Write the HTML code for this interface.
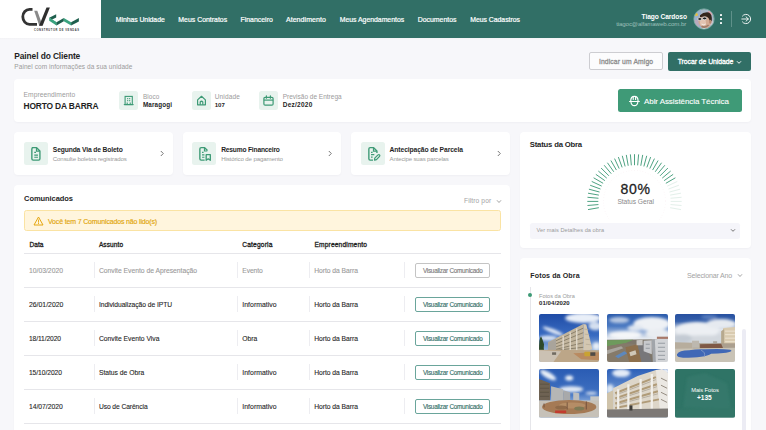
<!DOCTYPE html>
<html><head><meta charset="utf-8"><title>Painel do Cliente</title>
<style>
html,body{margin:0;padding:0;}
body{width:766px;height:430px;overflow:hidden;background:#f7f7fa;position:relative;font-family:"Liberation Sans",sans-serif;}
.abs{position:absolute;box-sizing:border-box;}
.t{position:absolute;white-space:nowrap;}
.card{position:absolute;background:#fff;border-radius:4px;box-shadow:0 1px 2px rgba(40,40,80,0.04);}
svg{display:block;}
.pb{display:inline-block;width:0;height:0;vertical-align:baseline;}
</style></head><body>
<div class="abs" style="left:0;top:0;width:101px;height:38px;background:#fff"></div>
<div class="abs" style="left:101px;top:0;width:665px;height:38px;background:#316f66"></div>
<div class="abs" style="left:0;top:38px;width:766px;height:2px;background:linear-gradient(rgba(0,0,0,0.02),rgba(0,0,0,0))"></div>
<svg class="abs" style="left:0;top:0" width="101" height="38" viewBox="0 0 101 38">
<path d="M32.5 9.3 H29.5 A6.7 7.55 0 0 0 29.5 24.4 H37" fill="none" stroke="#333" stroke-width="2.8"/>
<polygon points="34.2,10.8 37.3,10.8 42.6,25.8 39.3,25.8" fill="#8a8a8a"/>
<polygon points="46.5,7.6 49.9,7.6 42.6,25.8 39.1,25.8" fill="#2e2e2e"/>
<polygon points="56.2,14.2 56.2,17.4 52.2,19.4 49.2,17.8" fill="#1e5e4d"/>
<polygon points="49.2,17.8 52.2,19.4 56.5,22.2 56.5,25.4" fill="#3aa37f"/>
<polygon points="49.2,17.8 49.2,20.8 56.5,25.4 56.5,22.2" fill="#3aa37f"/>
<polygon points="56.5,22.2 63.8,18.0 63.8,21.2 56.5,25.4" fill="#1e5e4d"/>
<polygon points="63.8,18.0 71.1,22.2 71.1,25.4 63.8,21.2" fill="#3aa37f"/>
<polygon points="71.1,22.2 78.9,18.0 78.9,21.4 71.1,25.4" fill="#1e5e4d"/>
</svg>
<div class="t" style="left:34px;top:29.8px;font-size:2.6px;line-height:2.6px;font-weight:700;color:#3a3a3a;letter-spacing:0.57px">CONSTRUTOR DE VENDAS</div>
<div class="t" style="left:115.80px;top:17.00px;font-size:6.84px;line-height:6.84px;font-weight:400;color:#ffffff;letter-spacing:-0.034px;-webkit-text-stroke:0.2px #ffffff;">Minhas Unidade</div>
<div class="t" style="left:178.30px;top:17.01px;font-size:6.92px;line-height:6.92px;font-weight:400;color:#ffffff;letter-spacing:0.006px;-webkit-text-stroke:0.2px #ffffff;">Meus Contratos</div>
<div class="t" style="left:240.50px;top:17.00px;font-size:6.91px;line-height:6.91px;font-weight:400;color:#ffffff;letter-spacing:0.003px;-webkit-text-stroke:0.2px #ffffff;">Financeiro</div>
<div class="t" style="left:285.90px;top:16.02px;font-size:7.02px;line-height:7.02px;font-weight:400;color:#ffffff;letter-spacing:0.067px;-webkit-text-stroke:0.2px #ffffff;">Atendimento</div>
<div class="t" style="left:339.70px;top:17.00px;font-size:6.89px;line-height:6.89px;font-weight:400;color:#ffffff;letter-spacing:-0.008px;-webkit-text-stroke:0.2px #ffffff;">Meus Agendamentos</div>
<div class="t" style="left:417.70px;top:17.01px;font-size:6.92px;line-height:6.92px;font-weight:400;color:#ffffff;letter-spacing:0.007px;-webkit-text-stroke:0.2px #ffffff;">Documentos</div>
<div class="t" style="left:470.30px;top:17.01px;font-size:6.86px;line-height:6.86px;font-weight:400;color:#ffffff;letter-spacing:-0.025px;-webkit-text-stroke:0.2px #ffffff;">Meus Cadastros</div>
<div class="t" style="left:641.60px;top:14.00px;font-size:6.63px;line-height:6.63px;font-weight:700;color:#ffffff;letter-spacing:-0.075px;">Tiago Cardoso</div>
<div class="t" style="left:616.20px;top:21.01px;font-size:6.15px;line-height:6.15px;font-weight:400;color:#9dc0b9;letter-spacing:-0.125px;">tiagoc@alfamaweb.com.br</div>
<svg class="abs" style="left:693.2px;top:7.85px" width="22" height="22" viewBox="0 0 22 22">
<defs><clipPath id="av"><circle cx="11" cy="11" r="10"/></clipPath>
<filter id="bl" x="-10%" y="-10%" width="120%" height="120%"><feGaussianBlur stdDeviation="0.55"/></filter></defs>
<g clip-path="url(#av)"><rect width="22" height="22" fill="#a9b6c6"/>
<g filter="url(#bl)">
<rect x="0" y="0" width="8" height="22" fill="#9cb0cb"/>
<rect x="0" y="12" width="6" height="10" fill="#b9a9bd"/>
<circle cx="3.4" cy="6.6" r="1.5" fill="#e9bf37"/>
<circle cx="17.5" cy="4.6" r="2.6" fill="#d9a7b4"/>
<circle cx="19" cy="15" r="2.4" fill="#c9c3cf"/>
<ellipse cx="11.6" cy="13.2" rx="6.2" ry="7.4" transform="rotate(-14 11.6 13.2)" fill="#d3ab94"/>
<ellipse cx="10" cy="14.5" rx="3" ry="3.5" fill="#e2c3b1"/>
<path d="M7 7.2 Q10.5 3.6 16 4.4 Q19.4 6 18.8 13.2 L16.6 12.8 Q16 8.6 12 8.4 Q9.2 8.4 7 9.2Z" fill="#34251e"/>
<ellipse cx="17.3" cy="13.8" rx="1.3" ry="2" fill="#b98870"/>
<ellipse cx="6.8" cy="11" rx="2.1" ry="1.4" fill="#1c1c1c" stroke="#f0f0f0" stroke-width="0.75"/>
<ellipse cx="11.6" cy="10.4" rx="2.1" ry="1.4" fill="#1c1c1c" stroke="#f0f0f0" stroke-width="0.75"/>
<path d="M8.5 18.2 Q12 20.4 15.6 17" fill="none" stroke="#7d5f50" stroke-width="1.6" opacity="0.6"/>
<path d="M8.6 16.1 Q10.6 17.3 12.8 16" fill="none" stroke="#f6efe9" stroke-width="0.9"/>
<rect x="4" y="20" width="16" height="3" fill="#e8e3e6"/>
</g></g>
<circle cx="11" cy="11" r="10.2" fill="none" stroke="#7fb0a7" stroke-width="0.8"/>
</svg>
<div class="abs" style="left:720px;top:13.7px;width:2px;height:2px;background:#fff;border-radius:0.4px"></div>
<div class="abs" style="left:720px;top:18.1px;width:2px;height:2px;background:#fff;border-radius:0.4px"></div>
<div class="abs" style="left:720px;top:22.4px;width:2px;height:2px;background:#fff;border-radius:0.4px"></div>
<div class="abs" style="left:731px;top:11px;width:1px;height:16px;background:#5f918a"></div>
<svg class="abs" style="left:740px;top:13px" width="12" height="12" viewBox="0 0 12 12">
<path d="M2.2 3.4 A4.6 4.6 0 1 1 2.2 8.6" fill="none" stroke="#fff" stroke-width="0.9"/>
<path d="M1.8 6 H8.3 M6 3.8 L8.3 6 L6 8.2" fill="none" stroke="#fff" stroke-width="0.9" stroke-linecap="round" stroke-linejoin="round"/>
</svg>
<div class="t" style="left:14.30px;top:52.00px;font-size:8.42px;line-height:8.42px;font-weight:700;color:#1f1f1f;letter-spacing:-0.110px;">Painel do Cliente</div>
<div class="t" style="left:14.30px;top:64.02px;font-size:6.52px;line-height:6.52px;font-weight:400;color:#9b9b9b;letter-spacing:0.062px;">Painel com informações da sua unidade</div>
<div class="abs" style="left:589.1px;top:51.5px;width:74.4px;height:18.8px;border:1px solid #cdcdd1;border-radius:2px;background:#fcfcfd"></div>
<div class="t" style="left:598.90px;top:59.00px;font-size:6.78px;line-height:6.78px;font-weight:400;color:#8e8e8e;letter-spacing:0.128px;-webkit-text-stroke:0.3px #8e8e8e;">Indicar um Amigo</div>
<div class="abs" style="left:668.3px;top:51.9px;width:82.8px;height:18.8px;border-radius:2px;background:#316f66"></div>
<div class="t" style="left:677.70px;top:59.00px;font-size:6.87px;line-height:6.87px;font-weight:400;color:#ffffff;letter-spacing:-0.053px;-webkit-text-stroke:0.3px #ffffff;">Trocar de Unidade</div>
<svg class="abs" style="left:736.3px;top:59.5px" width="6" height="5" viewBox="0 0 6 5"><path d="M1 1.3 L3 3.3 L5 1.3" fill="none" stroke="#fff" stroke-width="1"/></svg>
<div class="card" style="left:14px;top:79px;width:737px;height:43px"></div>
<div class="t" style="left:23.50px;top:92.00px;font-size:6.66px;line-height:6.66px;font-weight:400;color:#9b9b9b;letter-spacing:0.073px;">Empreendimento</div>
<div class="t" style="left:23.50px;top:102.01px;font-size:8.42px;line-height:8.42px;font-weight:700;color:#1f1f1f;letter-spacing:-0.154px;">HORTO DA BARRA</div>
<div class="abs" style="left:119.3px;top:91px;width:19px;height:19px;background:#e8f3ee;border-radius:2.5px"></div>
<svg class="abs" style="left:119.3px;top:91px" width="19" height="19" viewBox="0 0 19 19"><g fill="none" stroke="#3d9a75" stroke-width="1.1">
<rect x="6.1" y="5.4" width="7.2" height="8.2"/>
<path d="M4.8 13.6 H14.6"/>
<path d="M8.2 7.6 h1 M10.2 7.6 h1 M8.2 9.6 h1 M10.2 9.6 h1 M8.2 11.6 v2 M11.2 11.6 v2"/>
</g></svg>
<div class="t" style="left:142.90px;top:94.00px;font-size:6.40px;line-height:6.40px;font-weight:400;color:#9b9b9b;letter-spacing:0.098px;">Bloco</div>
<div class="t" style="left:142.90px;top:102.00px;font-size:6.34px;line-height:6.34px;font-weight:700;color:#1f1f1f;letter-spacing:0.158px;">Maragogi</div>
<div class="abs" style="left:191.5px;top:91px;width:19px;height:19px;background:#e8f3ee;border-radius:2.5px"></div>
<svg class="abs" style="left:191.5px;top:91px" width="19" height="19" viewBox="0 0 19 19"><g fill="none" stroke="#3d9a75" stroke-width="1.2" stroke-linejoin="round">
<path d="M5.6 13.8 V8.9 L9.5 5.3 L13.4 8.9 V13.8 Z"/>
<path d="M8.2 13.8 V10.9 Q9.5 9.6 10.8 10.9 V13.8"/>
</g></svg>
<div class="t" style="left:214.70px;top:94.02px;font-size:6.52px;line-height:6.52px;font-weight:400;color:#9b9b9b;letter-spacing:0.172px;">Unidade</div>
<div class="t" style="left:214.70px;top:102.00px;font-size:6.11px;line-height:6.11px;font-weight:700;color:#1f1f1f;letter-spacing:0.001px;">107</div>
<div class="abs" style="left:259.2px;top:91px;width:19px;height:19px;background:#e8f3ee;border-radius:2.5px"></div>
<svg class="abs" style="left:259.2px;top:91px" width="19" height="19" viewBox="0 0 19 19"><g fill="none" stroke="#3d9a75" stroke-width="1.2">
<rect x="4.9" y="6.3" width="9.2" height="7.8" rx="1.2"/>
<path d="M4.9 9.1 H14.1"/>
<path d="M7.4 4.8 V7.2 M11.4 4.8 V7.2" stroke-linecap="round"/>
</g></svg>
<div class="t" style="left:282.70px;top:94.01px;font-size:6.53px;line-height:6.53px;font-weight:400;color:#9b9b9b;letter-spacing:-0.005px;">Previsão de Entrega</div>
<div class="t" style="left:282.70px;top:102.00px;font-size:6.51px;line-height:6.51px;font-weight:700;color:#1f1f1f;letter-spacing:0.263px;">Dez/2020</div>
<div class="abs" style="left:617.5px;top:88.7px;width:124.3px;height:23.7px;background:#3f9a77;border-radius:2.5px"></div>
<svg class="abs" style="left:627px;top:94px" width="14" height="14" viewBox="0 0 14 14">
<g fill="none" stroke="#fff" stroke-width="1.15" stroke-linecap="round">
<path d="M3.7 7.2 Q3.7 2.3 7.4 2.3 Q11.1 2.3 11.1 7.2"/>
<path d="M2.5 7.5 H12.3"/>
<path d="M3.9 7.7 Q4.3 11.6 7.4 11.6 Q10.5 11.6 10.9 7.7"/>
<path d="M6.2 3.2 V5.4 M8.6 3.2 V5.4"/>
</g></svg>
<div class="t" style="left:644.00px;top:98.02px;font-size:7.99px;line-height:7.99px;font-weight:400;color:#ffffff;letter-spacing:-0.067px;-webkit-text-stroke:0.1px #ffffff;">Abir Assistência Técnica</div>
<div class="card" style="left:14.4px;top:132px;width:158.7px;height:43px"></div>
<div class="abs" style="left:23.8px;top:141.8px;width:23.8px;height:23.6px;background:#e8f3ee;border-radius:2.5px"></div>
<svg class="abs" style="left:23.8px;top:142px" width="24" height="24" viewBox="0 0 22 22"><path d="M7.2 5.2 H11.6 L14.6 8.2 V15.4 Q14.6 16.6 13.4 16.6 H8.4 Q7.2 16.6 7.2 15.4 V6.4 Q7.2 5.2 8.4 5.2" fill="none" stroke="#3d9a75" stroke-width="1.25" stroke-linejoin="round"/><path d="M11.4 5.4 V8.4 H14.4" fill="none" stroke="#3d9a75" stroke-width="1"/><path d="M9.4 9.6 h1.6 M9.4 12 h3.4 M9.4 14 h3.4" stroke="#3d9a75" stroke-width="1.1" fill="none"/></svg>
<div class="t" style="left:52.80px;top:147.02px;font-size:6.72px;line-height:6.72px;font-weight:700;color:#1f1f1f;letter-spacing:-0.136px;">Segunda Via de Boleto</div>
<div class="t" style="left:52.80px;top:156.01px;font-size:6.12px;line-height:6.12px;font-weight:400;color:#9b9b9b;letter-spacing:-0.124px;">Consulte boletos registrados</div>
<svg class="abs" style="left:159.0px;top:150px" width="6" height="7" viewBox="0 0 6 7"><path d="M1.8 1 L4.3 3.5 L1.8 6" fill="none" stroke="#777" stroke-width="1"/></svg>
<div class="card" style="left:183.2px;top:132px;width:158.2px;height:43px"></div>
<div class="abs" style="left:192.3px;top:141.8px;width:23.8px;height:23.6px;background:#e8f3ee;border-radius:2.5px"></div>
<svg class="abs" style="left:192.3px;top:142px" width="24" height="24" viewBox="0 0 22 22"><path d="M11.6 16.6 H8.4 Q7.2 16.6 7.2 15.4 V6.4 Q7.2 5.2 8.4 5.2 H11.6 L14.2 7.8" fill="none" stroke="#3d9a75" stroke-width="1.25" stroke-linejoin="round"/><path d="M11.4 5.4 V8.2 H14" fill="none" stroke="#3d9a75" stroke-width="1"/><path d="M9.2 9.6 h1.4 M9.2 11.8 h2.2 M9.2 14 h2.2" stroke="#3d9a75" stroke-width="1.1" fill="none"/><path d="M13 16.8 V11.6 H16.8 V16.8 L14.9 15.4 Z" fill="none" stroke="#3d9a75" stroke-width="1.2" stroke-linejoin="round"/></svg>
<div class="t" style="left:221.20px;top:147.01px;font-size:6.65px;line-height:6.65px;font-weight:700;color:#1f1f1f;letter-spacing:-0.181px;">Resumo Financeiro</div>
<div class="t" style="left:221.20px;top:156.01px;font-size:6.12px;line-height:6.12px;font-weight:400;color:#9b9b9b;letter-spacing:-0.134px;">Histórico de pagamento</div>
<svg class="abs" style="left:327.3px;top:150px" width="6" height="7" viewBox="0 0 6 7"><path d="M1.8 1 L4.3 3.5 L1.8 6" fill="none" stroke="#777" stroke-width="1"/></svg>
<div class="card" style="left:351.4px;top:132px;width:158.5px;height:43px"></div>
<div class="abs" style="left:361.2px;top:141.8px;width:23.8px;height:23.6px;background:#e8f3ee;border-radius:2.5px"></div>
<svg class="abs" style="left:361.2px;top:142px" width="24" height="24" viewBox="0 0 22 22"><path d="M11 16.6 H8.4 Q7.2 16.6 7.2 15.4 V6.4 Q7.2 5.2 8.4 5.2 H11.6 L14.6 8.2 V10" fill="none" stroke="#3d9a75" stroke-width="1.25" stroke-linejoin="round"/><path d="M11.4 5.4 V8.4 H14.4" fill="none" stroke="#3d9a75" stroke-width="1"/><path d="M9.2 9.6 h1.4 M9.2 11.6 h3 M9.2 13.8 h1.4" stroke="#3d9a75" stroke-width="1.1" fill="none"/><path d="M12.4 16.6 L12.6 14.8 L15.6 11.8 Q16.4 11.2 17 11.8 Q17.6 12.6 17 13.2 L14.2 16.2 Z" fill="none" stroke="#3d9a75" stroke-width="1.1" stroke-linejoin="round"/></svg>
<div class="t" style="left:389.60px;top:147.02px;font-size:6.75px;line-height:6.75px;font-weight:700;color:#1f1f1f;letter-spacing:-0.117px;">Antecipação de Parcela</div>
<div class="t" style="left:389.60px;top:156.01px;font-size:6.06px;line-height:6.06px;font-weight:400;color:#9b9b9b;letter-spacing:-0.156px;">Antecipe suas parcelas</div>
<svg class="abs" style="left:495.8px;top:150px" width="6" height="7" viewBox="0 0 6 7"><path d="M1.8 1 L4.3 3.5 L1.8 6" fill="none" stroke="#777" stroke-width="1"/></svg>
<div class="card" style="left:520px;top:132.2px;width:230.8px;height:115.5px"></div>
<div class="t" style="left:529.80px;top:141.01px;font-size:7.71px;line-height:7.71px;font-weight:700;color:#1f1f1f;letter-spacing:-0.189px;">Status da Obra</div>
<svg class="abs" style="left:580px;top:145px" width="110" height="75" viewBox="0 0 110 75"><circle cx="54.5" cy="56.400000000000006" r="31" fill="none" stroke="#f6e8ec" stroke-width="0.6" stroke-dasharray="0.6 2.2"/><line x1="18.85" y1="62.69" x2="8.02" y2="64.60" stroke="#4fa383" stroke-width="1.0"/><line x1="18.44" y1="59.56" x2="7.48" y2="60.51" stroke="#4fa383" stroke-width="1.0"/><line x1="18.30" y1="56.40" x2="7.30" y2="56.40" stroke="#4fa383" stroke-width="1.0"/><line x1="18.44" y1="53.24" x2="7.48" y2="52.29" stroke="#4fa383" stroke-width="1.0"/><line x1="18.85" y1="50.11" x2="8.02" y2="48.20" stroke="#4fa383" stroke-width="1.0"/><line x1="19.53" y1="47.03" x2="8.91" y2="44.18" stroke="#4fa383" stroke-width="1.0"/><line x1="20.48" y1="44.02" x2="10.15" y2="40.26" stroke="#4fa383" stroke-width="1.0"/><line x1="21.69" y1="41.10" x2="11.72" y2="36.45" stroke="#4fa383" stroke-width="1.0"/><line x1="23.15" y1="38.30" x2="13.62" y2="32.80" stroke="#4fa383" stroke-width="1.0"/><line x1="24.85" y1="35.64" x2="15.84" y2="29.33" stroke="#4fa383" stroke-width="1.0"/><line x1="26.77" y1="33.13" x2="18.34" y2="26.06" stroke="#4fa383" stroke-width="1.0"/><line x1="28.90" y1="30.80" x2="21.12" y2="23.02" stroke="#4fa383" stroke-width="1.0"/><line x1="31.23" y1="28.67" x2="24.16" y2="20.24" stroke="#4fa383" stroke-width="1.0"/><line x1="33.74" y1="26.75" x2="27.43" y2="17.74" stroke="#4fa383" stroke-width="1.0"/><line x1="36.40" y1="25.05" x2="30.90" y2="15.52" stroke="#4fa383" stroke-width="1.0"/><line x1="39.20" y1="23.59" x2="34.55" y2="13.62" stroke="#4fa383" stroke-width="1.0"/><line x1="42.12" y1="22.38" x2="38.36" y2="12.05" stroke="#4fa383" stroke-width="1.0"/><line x1="45.13" y1="21.43" x2="42.28" y2="10.81" stroke="#4fa383" stroke-width="1.0"/><line x1="48.21" y1="20.75" x2="46.30" y2="9.92" stroke="#4fa383" stroke-width="1.0"/><line x1="51.34" y1="20.34" x2="50.39" y2="9.38" stroke="#4fa383" stroke-width="1.0"/><line x1="54.50" y1="20.20" x2="54.50" y2="9.20" stroke="#4fa383" stroke-width="1.0"/><line x1="57.66" y1="20.34" x2="58.61" y2="9.38" stroke="#4fa383" stroke-width="1.0"/><line x1="60.79" y1="20.75" x2="62.70" y2="9.92" stroke="#4fa383" stroke-width="1.0"/><line x1="63.87" y1="21.43" x2="66.72" y2="10.81" stroke="#4fa383" stroke-width="1.0"/><line x1="66.88" y1="22.38" x2="70.64" y2="12.05" stroke="#4fa383" stroke-width="1.0"/><line x1="69.80" y1="23.59" x2="74.45" y2="13.62" stroke="#4fa383" stroke-width="1.0"/><line x1="72.60" y1="25.05" x2="78.10" y2="15.52" stroke="#4fa383" stroke-width="1.0"/><line x1="75.26" y1="26.75" x2="81.57" y2="17.74" stroke="#4fa383" stroke-width="1.0"/><line x1="77.77" y1="28.67" x2="84.84" y2="20.24" stroke="#4fa383" stroke-width="1.0"/><line x1="80.10" y1="30.80" x2="87.88" y2="23.02" stroke="#4fa383" stroke-width="1.0"/><line x1="82.23" y1="33.13" x2="90.66" y2="26.06" stroke="#4fa383" stroke-width="1.0"/><line x1="84.15" y1="35.64" x2="93.16" y2="29.33" stroke="#4fa383" stroke-width="1.0"/><line x1="85.85" y1="38.30" x2="95.38" y2="32.80" stroke="#4fa383" stroke-width="1.0"/><line x1="87.31" y1="41.10" x2="97.28" y2="36.45" stroke="#e3f0ea" stroke-width="1.0"/><line x1="88.52" y1="44.02" x2="98.85" y2="40.26" stroke="#e3f0ea" stroke-width="1.0"/><line x1="89.47" y1="47.03" x2="100.09" y2="44.18" stroke="#e3f0ea" stroke-width="1.0"/><line x1="90.15" y1="50.11" x2="100.98" y2="48.20" stroke="#e3f0ea" stroke-width="1.0"/><line x1="90.56" y1="53.24" x2="101.52" y2="52.29" stroke="#e3f0ea" stroke-width="1.0"/><line x1="90.70" y1="56.40" x2="101.70" y2="56.40" stroke="#e3f0ea" stroke-width="1.0"/><line x1="90.56" y1="59.56" x2="101.52" y2="60.51" stroke="#e3f0ea" stroke-width="1.0"/><line x1="90.15" y1="62.69" x2="100.98" y2="64.60" stroke="#e3f0ea" stroke-width="1.0"/></svg>
<div class="t" style="left:620.40px;top:182.00px;font-size:14.07px;line-height:14.07px;font-weight:400;color:#1f1f1f;letter-spacing:0.732px;-webkit-text-stroke:0.3px #1f1f1f;">80%</div>
<div class="t" style="left:617.40px;top:199.01px;font-size:6.71px;line-height:6.71px;font-weight:400;color:#8a8a8a;letter-spacing:-0.062px;">Status Geral</div>
<div class="abs" style="left:529.6px;top:222.5px;width:210.5px;height:16px;background:#f5f5fa;border-radius:2.5px"></div>
<div class="t" style="left:536.50px;top:228.01px;font-size:5.63px;line-height:5.63px;font-weight:400;color:#9a9a9a;letter-spacing:0.052px;">Ver mais Detalhes da obra</div>
<svg class="abs" style="left:729.5px;top:228px" width="6" height="5" viewBox="0 0 6 5"><path d="M1 1.3 L3 3.3 L5 1.3" fill="none" stroke="#666" stroke-width="0.9"/></svg>
<div class="card" style="left:14.4px;top:185.2px;width:495.8px;height:260px"></div>
<div class="t" style="left:24.10px;top:195.01px;font-size:7.51px;line-height:7.51px;font-weight:700;color:#1f1f1f;letter-spacing:-0.076px;">Comunicados</div>
<div class="t" style="left:464.00px;top:198.01px;font-size:6.64px;line-height:6.64px;font-weight:400;color:#a3a3a3;letter-spacing:0.111px;">Filtro por</div>
<svg class="abs" style="left:495.5px;top:198.5px" width="6" height="5" viewBox="0 0 6 5"><path d="M1 1.3 L3 3.5 L5 1.3" fill="none" stroke="#9a9a9a" stroke-width="0.9"/></svg>
<div class="abs" style="left:23.9px;top:210.3px;width:477px;height:21.1px;background:#fff5dd;border:1px solid #fae3a3;border-radius:2.5px"></div>
<svg class="abs" style="left:33px;top:216px" width="11" height="10" viewBox="0 0 11 10">
<path d="M5.5 1 L10 9 H1 Z" fill="none" stroke="#e5a60f" stroke-width="1" stroke-linejoin="round"/>
<path d="M5.5 4 V6.2 M5.5 7.3 V7.6" stroke="#e5a60f" stroke-width="0.9" stroke-linecap="round"/></svg>
<div class="t" style="left:48.00px;top:219.01px;font-size:6.97px;line-height:6.97px;font-weight:400;color:#e2a50c;letter-spacing:-0.143px;-webkit-text-stroke:0.15px #e2a50c;">Você tem 7 Comunicados não lido(s)</div>
<div class="t" style="left:29.40px;top:242.02px;font-size:6.53px;line-height:6.53px;font-weight:400;color:#1f1f1f;letter-spacing:0.097px;-webkit-text-stroke:0.3px #1f1f1f;">Data</div>
<div class="t" style="left:98.90px;top:242.00px;font-size:6.54px;line-height:6.54px;font-weight:400;color:#1f1f1f;letter-spacing:0.091px;-webkit-text-stroke:0.3px #1f1f1f;">Assunto</div>
<div class="t" style="left:242.30px;top:242.00px;font-size:6.67px;line-height:6.67px;font-weight:400;color:#1f1f1f;letter-spacing:0.156px;-webkit-text-stroke:0.3px #1f1f1f;">Categoria</div>
<div class="t" style="left:314.50px;top:242.00px;font-size:6.64px;line-height:6.64px;font-weight:400;color:#1f1f1f;letter-spacing:0.149px;-webkit-text-stroke:0.3px #1f1f1f;">Empreendimento</div>
<div class="abs" style="left:23.9px;top:252.8px;width:477px;height:1px;background:#e6e6ea"></div>
<div class="abs" style="left:23.9px;top:286.8px;width:477px;height:1px;background:#e6e6ea"></div>
<div class="abs" style="left:23.9px;top:320.8px;width:477px;height:1px;background:#e6e6ea"></div>
<div class="abs" style="left:23.9px;top:354.8px;width:477px;height:1px;background:#e6e6ea"></div>
<div class="abs" style="left:23.9px;top:388.8px;width:477px;height:1px;background:#e6e6ea"></div>
<div class="abs" style="left:23.9px;top:422.8px;width:477px;height:1px;background:#e6e6ea"></div>
<div class="t" style="left:28.90px;top:268.00px;font-size:6.83px;line-height:6.83px;font-weight:400;color:#9a9a9a;letter-spacing:0.000px;-webkit-text-stroke:0.1px #9a9a9a;">10/03/2020</div>
<div class="t" style="left:98.90px;top:268.00px;font-size:6.79px;line-height:6.79px;font-weight:400;color:#9a9a9a;letter-spacing:-0.021px;-webkit-text-stroke:0.1px #9a9a9a;">Convite Evento de Apresentação</div>
<div class="t" style="left:242.30px;top:268.01px;font-size:6.71px;line-height:6.71px;font-weight:400;color:#9a9a9a;letter-spacing:-0.077px;-webkit-text-stroke:0.1px #9a9a9a;">Evento</div>
<div class="t" style="left:314.20px;top:268.02px;font-size:6.75px;line-height:6.75px;font-weight:400;color:#9a9a9a;letter-spacing:-0.040px;-webkit-text-stroke:0.1px #9a9a9a;">Horto da Barra</div>
<div class="abs" style="left:94.0px;top:262.1px;width:1px;height:15.7px;background:#ededf1"></div>
<div class="abs" style="left:236.9px;top:262.1px;width:1px;height:15.7px;background:#ededf1"></div>
<div class="abs" style="left:308.8px;top:262.1px;width:1px;height:15.7px;background:#ededf1"></div>
<div class="abs" style="left:403.9px;top:262.1px;width:1px;height:15.7px;background:#ededf1"></div>
<div class="abs" style="left:415.3px;top:263.3px;width:75.2px;height:14.3px;border:1px solid #c4c4c4;border-radius:2px"></div>
<div class="t" style="left:422.90px;top:268.01px;font-size:6.34px;line-height:6.34px;font-weight:400;color:#7a7a7a;letter-spacing:-0.232px;-webkit-text-stroke:0.12px #7a7a7a;">Visualizar Comunicado</div>
<div class="t" style="left:28.90px;top:302.01px;font-size:6.87px;line-height:6.87px;font-weight:400;color:#262626;letter-spacing:0.023px;-webkit-text-stroke:0.1px #262626;">26/01/2020</div>
<div class="t" style="left:98.90px;top:302.00px;font-size:6.73px;line-height:6.73px;font-weight:400;color:#262626;letter-spacing:-0.047px;-webkit-text-stroke:0.1px #262626;">Individualização de IPTU</div>
<div class="t" style="left:242.30px;top:302.01px;font-size:6.89px;line-height:6.89px;font-weight:400;color:#262626;letter-spacing:0.031px;-webkit-text-stroke:0.1px #262626;">Informativo</div>
<div class="t" style="left:314.20px;top:302.02px;font-size:6.75px;line-height:6.75px;font-weight:400;color:#262626;letter-spacing:-0.040px;-webkit-text-stroke:0.1px #262626;">Horto da Barra</div>
<div class="abs" style="left:94.0px;top:296.1px;width:1px;height:15.7px;background:#ededf1"></div>
<div class="abs" style="left:236.9px;top:296.1px;width:1px;height:15.7px;background:#ededf1"></div>
<div class="abs" style="left:308.8px;top:296.1px;width:1px;height:15.7px;background:#ededf1"></div>
<div class="abs" style="left:403.9px;top:296.1px;width:1px;height:15.7px;background:#ededf1"></div>
<div class="abs" style="left:415.3px;top:297.3px;width:75.2px;height:14.3px;border:1px solid #6aa59b;border-radius:2px"></div>
<div class="t" style="left:422.90px;top:302.01px;font-size:6.34px;line-height:6.34px;font-weight:400;color:#2f6e66;letter-spacing:-0.232px;-webkit-text-stroke:0.12px #2f6e66;">Visualizar Comunicado</div>
<div class="t" style="left:28.90px;top:336.02px;font-size:6.68px;line-height:6.68px;font-weight:400;color:#262626;letter-spacing:-0.081px;-webkit-text-stroke:0.1px #262626;">18/11/2020</div>
<div class="t" style="left:98.90px;top:336.00px;font-size:6.79px;line-height:6.79px;font-weight:400;color:#262626;letter-spacing:-0.023px;-webkit-text-stroke:0.1px #262626;">Convite Evento Viva</div>
<div class="t" style="left:242.30px;top:336.00px;font-size:6.79px;line-height:6.79px;font-weight:400;color:#262626;letter-spacing:-0.033px;-webkit-text-stroke:0.1px #262626;">Obra</div>
<div class="t" style="left:314.20px;top:336.02px;font-size:6.75px;line-height:6.75px;font-weight:400;color:#262626;letter-spacing:-0.040px;-webkit-text-stroke:0.1px #262626;">Horto da Barra</div>
<div class="abs" style="left:94.0px;top:330.1px;width:1px;height:15.7px;background:#ededf1"></div>
<div class="abs" style="left:236.9px;top:330.1px;width:1px;height:15.7px;background:#ededf1"></div>
<div class="abs" style="left:308.8px;top:330.1px;width:1px;height:15.7px;background:#ededf1"></div>
<div class="abs" style="left:403.9px;top:330.1px;width:1px;height:15.7px;background:#ededf1"></div>
<div class="abs" style="left:415.3px;top:331.3px;width:75.2px;height:14.3px;border:1px solid #6aa59b;border-radius:2px"></div>
<div class="t" style="left:422.90px;top:336.01px;font-size:6.34px;line-height:6.34px;font-weight:400;color:#2f6e66;letter-spacing:-0.232px;-webkit-text-stroke:0.12px #2f6e66;">Visualizar Comunicado</div>
<div class="t" style="left:28.90px;top:370.00px;font-size:6.73px;line-height:6.73px;font-weight:400;color:#262626;letter-spacing:-0.055px;-webkit-text-stroke:0.1px #262626;">15/10/2020</div>
<div class="t" style="left:98.90px;top:370.00px;font-size:6.79px;line-height:6.79px;font-weight:400;color:#262626;letter-spacing:-0.022px;-webkit-text-stroke:0.1px #262626;">Status de Obra</div>
<div class="t" style="left:242.30px;top:370.01px;font-size:6.89px;line-height:6.89px;font-weight:400;color:#262626;letter-spacing:0.031px;-webkit-text-stroke:0.1px #262626;">Informativo</div>
<div class="t" style="left:314.20px;top:370.02px;font-size:6.75px;line-height:6.75px;font-weight:400;color:#262626;letter-spacing:-0.040px;-webkit-text-stroke:0.1px #262626;">Horto da Barra</div>
<div class="abs" style="left:94.0px;top:364.1px;width:1px;height:15.7px;background:#ededf1"></div>
<div class="abs" style="left:236.9px;top:364.1px;width:1px;height:15.7px;background:#ededf1"></div>
<div class="abs" style="left:308.8px;top:364.1px;width:1px;height:15.7px;background:#ededf1"></div>
<div class="abs" style="left:403.9px;top:364.1px;width:1px;height:15.7px;background:#ededf1"></div>
<div class="abs" style="left:415.3px;top:365.3px;width:75.2px;height:14.3px;border:1px solid #6aa59b;border-radius:2px"></div>
<div class="t" style="left:422.90px;top:370.01px;font-size:6.34px;line-height:6.34px;font-weight:400;color:#2f6e66;letter-spacing:-0.232px;-webkit-text-stroke:0.12px #2f6e66;">Visualizar Comunicado</div>
<div class="t" style="left:28.90px;top:404.01px;font-size:6.80px;line-height:6.80px;font-weight:400;color:#262626;letter-spacing:-0.016px;-webkit-text-stroke:0.1px #262626;">14/07/2020</div>
<div class="t" style="left:98.90px;top:404.01px;font-size:6.69px;line-height:6.69px;font-weight:400;color:#262626;letter-spacing:-0.074px;-webkit-text-stroke:0.1px #262626;">Uso de Carência</div>
<div class="t" style="left:242.30px;top:404.01px;font-size:6.89px;line-height:6.89px;font-weight:400;color:#262626;letter-spacing:0.031px;-webkit-text-stroke:0.1px #262626;">Informativo</div>
<div class="t" style="left:314.20px;top:404.02px;font-size:6.75px;line-height:6.75px;font-weight:400;color:#262626;letter-spacing:-0.040px;-webkit-text-stroke:0.1px #262626;">Horto da Barra</div>
<div class="abs" style="left:94.0px;top:398.1px;width:1px;height:15.7px;background:#ededf1"></div>
<div class="abs" style="left:236.9px;top:398.1px;width:1px;height:15.7px;background:#ededf1"></div>
<div class="abs" style="left:308.8px;top:398.1px;width:1px;height:15.7px;background:#ededf1"></div>
<div class="abs" style="left:403.9px;top:398.1px;width:1px;height:15.7px;background:#ededf1"></div>
<div class="abs" style="left:415.3px;top:399.3px;width:75.2px;height:14.3px;border:1px solid #6aa59b;border-radius:2px"></div>
<div class="t" style="left:422.90px;top:404.01px;font-size:6.34px;line-height:6.34px;font-weight:400;color:#2f6e66;letter-spacing:-0.232px;-webkit-text-stroke:0.12px #2f6e66;">Visualizar Comunicado</div>
<div class="card" style="left:520.4px;top:258.4px;width:231px;height:200px"></div>
<div class="t" style="left:530.30px;top:273.01px;font-size:7.09px;line-height:7.09px;font-weight:700;color:#1f1f1f;letter-spacing:0.108px;">Fotos da Obra</div>
<div class="t" style="left:687.10px;top:272.01px;font-size:7.05px;line-height:7.05px;font-weight:400;color:#a3a3a3;letter-spacing:-0.178px;">Selecionar Ano</div>
<svg class="abs" style="left:736.5px;top:273px" width="6" height="5" viewBox="0 0 6 5"><path d="M1 1.3 L3 3.5 L5 1.3" fill="none" stroke="#9a9a9a" stroke-width="0.9"/></svg>
<div class="abs" style="left:530.1px;top:287px;width:1px;height:150px;background:#e6e6ea"></div>
<div class="abs" style="left:528.1px;top:292.9px;width:4.4px;height:4.4px;border-radius:50%;background:#3d9a75"></div>
<div class="t" style="left:539.00px;top:294.00px;font-size:5.57px;line-height:5.57px;font-weight:400;color:#9b9b9b;letter-spacing:0.024px;">Fotos da Obra</div>
<div class="t" style="left:539.00px;top:301.01px;font-size:5.97px;line-height:5.97px;font-weight:700;color:#1f1f1f;letter-spacing:0.090px;">01/04/2020</div>
<div class="abs" style="left:742.3px;top:329.3px;width:4px;height:110px;background:#ececf4;border-radius:2px"></div>
<div class="abs" style="left:538.9px;top:313.9px;width:60.4px;height:48.4px;border-radius:2px;overflow:hidden"><svg width="60.4" height="48.4" viewBox="0 0 60 48" preserveAspectRatio="none"><defs><linearGradient id="s1" x1="0" y1="0" x2="0" y2="1"><stop offset="0" stop-color="#1f4ca6"/><stop offset="0.45" stop-color="#3a6cc2"/><stop offset="0.75" stop-color="#94b4de"/></linearGradient><filter id="f1" x="-20%" y="-20%" width="140%" height="140%"><feGaussianBlur stdDeviation="1.6"/></filter><filter id="g1"><feGaussianBlur stdDeviation="0.35"/></filter></defs><rect width="60" height="48" fill="url(#s1)"/><g filter="url(#f1)"><ellipse cx="44" cy="4" rx="18" ry="5" fill="#e9eff8"/><ellipse cx="56" cy="12" rx="7" ry="4" fill="#d5e0f0"/><ellipse cx="14" cy="17" rx="11" ry="2" transform="rotate(22 14 17)" fill="#e8eef8"/><ellipse cx="9" cy="24" rx="9" ry="2.6" fill="#d9e3f2"/><ellipse cx="57" cy="32" rx="4" ry="4" fill="#e6edf6"/></g><g filter="url(#g1)"><polygon points="9,28 44,10 44,37.5 9,36" fill="#c2b59d"/><polygon points="44,10 47,10.5 53,35 44,37.5" fill="#d3c7b1"/><polygon points="9,28 17,24.5 17,36 9,36" fill="#a9a49b"/><path d="M17 26.5 L44 14 M17 29.5 L44 18.5 M17 32.5 L44 23.5 M17 35 L44 28.5 M17 36 L44 33" stroke="#857a67" stroke-width="0.9" fill="none"/><path d="M24 21.5 V36.5 M31 18 V37 M37.5 14.5 V37.2" stroke="#e3dccf" stroke-width="1.3"/><path d="M45 15 L49 15.5 M45.5 20 L50 20.5 M46 25 L51 25.6 M46.5 30 L52 30.6" stroke="#b7ab95" stroke-width="0.7"/><path d="M0 36 Q0 24 2 22 Q4 26 5 30 Q4.5 34 5 36Z" fill="#2f4a2b"/><polygon points="0,35.5 60,36 60,48 0,48" fill="#bca688"/><polygon points="0,36 22,37 14,48 0,48" fill="#cbc1b3"/><polygon points="34,39 60,38 60,46 42,45" fill="#b98a60"/><rect x="45" y="37.5" width="6" height="4.5" rx="1" fill="#c9a233"/><rect x="51" y="38" width="5" height="3.5" fill="#4f4b46"/><rect x="13" y="38" width="4" height="2.5" fill="#6f6a60"/></g></svg></div>
<div class="abs" style="left:606.9px;top:313.9px;width:61.1px;height:48.4px;border-radius:2px;overflow:hidden"><svg width="61.1" height="48.4" viewBox="0 0 60 48" preserveAspectRatio="none"><defs><linearGradient id="s2" x1="0" y1="0" x2="0" y2="1"><stop offset="0" stop-color="#2a5aab"/><stop offset="0.25" stop-color="#4a79c2"/><stop offset="0.5" stop-color="#e3e8ef"/></linearGradient><filter id="f2" x="-20%" y="-20%" width="140%" height="140%"><feGaussianBlur stdDeviation="1.6"/></filter><filter id="g2"><feGaussianBlur stdDeviation="0.35"/></filter></defs><rect width="60" height="48" fill="url(#s2)"/><g filter="url(#f2)"><ellipse cx="44" cy="10" rx="18" ry="7" fill="#eef1f5"/><ellipse cx="18" cy="21" rx="16" ry="4" fill="#f4f6f8"/><ellipse cx="50" cy="20" rx="12" ry="5" fill="#e9edf1"/><ellipse cx="28" cy="14" rx="8" ry="3" fill="#dfe6f0"/><ellipse cx="12" cy="6" rx="10" ry="3" fill="#b7c8e2"/></g><g filter="url(#g2)"><polygon points="0,25.5 60,25 60,48 0,48" fill="#7d766b"/><polygon points="0,26 26,25.5 18,29 0,32" fill="#6e9a5c"/><polygon points="0,32 18,29 30,30 30,48 0,48" fill="#857a6a"/><polygon points="0,36 14,32 16,34 0,40" fill="#a9a59e"/><polygon points="8,42 17,37 20,39 11,44" fill="#5d88bd"/><polygon points="18,33 30,30 34,48 22,48" fill="#8d6f4e"/><polygon points="22,38 28,36 29,40 23,42" fill="#cfc8b8"/><polygon points="30,30 38,29 44,48 34,48" fill="#77777a"/><polygon points="29,26 35,25.5 35,31 29,31" fill="#c8c6c3"/><polygon points="36,26.5 44,26 44,40 36,37" fill="#c7c9cc"/><polygon points="44,25.5 60,23.5 60,48 46,48" fill="#d2d4d7"/><polygon points="44,25.5 47,25 48,48 45,48" fill="#a1a5aa"/><path d="M50 29 h7 M50 33 h7 M50 37 h7 M50 41 h7 M50 45 h7 M38 30 h4 M38 34 h4" stroke="#8a8f96" stroke-width="0.8"/><rect x="49" y="22.5" width="11" height="2.2" fill="#a87a6a"/></g></svg></div>
<div class="abs" style="left:675.1px;top:313.9px;width:60.2px;height:48.4px;border-radius:2px;overflow:hidden"><svg width="60.2" height="48.4" viewBox="0 0 60 48" preserveAspectRatio="none"><defs><linearGradient id="s3" x1="0" y1="0" x2="0" y2="1"><stop offset="0" stop-color="#2750a0"/><stop offset="0.15" stop-color="#3560aa"/><stop offset="0.32" stop-color="#dde2e8"/><stop offset="0.6" stop-color="#c8ced6"/></linearGradient><filter id="f3" x="-20%" y="-20%" width="140%" height="140%"><feGaussianBlur stdDeviation="1.6"/></filter><filter id="g3"><feGaussianBlur stdDeviation="0.35"/></filter></defs><rect width="60" height="48" fill="url(#s3)"/><g filter="url(#f3)"><ellipse cx="22" cy="16" rx="22" ry="8" fill="#eceff3"/><ellipse cx="46" cy="10" rx="15" ry="5" fill="#e6eaf0"/><ellipse cx="30" cy="25" rx="28" ry="4" fill="#d3d8de"/><ellipse cx="8" cy="24" rx="9" ry="4" fill="#c3cad3"/><ellipse cx="34" cy="3" rx="8" ry="2" fill="#5a7fbf"/></g><g filter="url(#g3)"><polygon points="48,14 60,13 60,33 48,33" fill="#d9cbb0"/><polygon points="46,17 49,15 49,33 46,33" fill="#b7a98e"/><path d="M50 17 H60 M50 20.5 H60 M50 24 H60 M50 27.5 H60" stroke="#efe7d6" stroke-width="0.9"/><polygon points="0,29 60,29 60,35 0,35" fill="#ab9f8e"/><polygon points="0,28 18,28.5 18,35 0,35" fill="#b7ad9d"/><rect x="17" y="26.5" width="7" height="7" fill="#bdb8af"/><rect x="38" y="27" width="4" height="6" fill="#aaa69f"/><polygon points="25,30 46,29.5 48,34 25,34" fill="#7e5844"/><polygon points="0,34.5 60,33.5 60,48 0,48" fill="#c9c3b6"/><path d="M2 40 Q4 36 14 36 Q22 34.5 30 35 Q46 34 55 35.5 Q59 37 51 38.5 Q42 39.5 36 39.5 Q30 43.5 8 43.5 Q1 43 2 40Z" fill="#4068b6"/><path d="M26 36 Q31 38 29 42.5" stroke="#7d97c6" stroke-width="0.9" fill="none"/></g></svg></div>
<div class="abs" style="left:538.9px;top:369.2px;width:60.4px;height:48.6px;border-radius:2px;overflow:hidden"><svg width="60.4" height="48.6" viewBox="0 0 60 48" preserveAspectRatio="none"><defs><linearGradient id="s4" x1="0" y1="0" x2="0" y2="1"><stop offset="0" stop-color="#2a5cb4"/><stop offset="0.5" stop-color="#3e6fc0"/><stop offset="0.7" stop-color="#8eb0de"/></linearGradient><filter id="f4" x="-20%" y="-20%" width="140%" height="140%"><feGaussianBlur stdDeviation="1.6"/></filter><filter id="g4"><feGaussianBlur stdDeviation="0.35"/></filter></defs><rect width="60" height="48" fill="url(#s4)"/><g filter="url(#f4)"><ellipse cx="9" cy="6" rx="9" ry="3" transform="rotate(30 9 6)" fill="#eaf0f8"/><ellipse cx="30" cy="9" rx="4" ry="2.5" fill="#f1f5fa"/><ellipse cx="32" cy="20" rx="12" ry="3" fill="#e3eaf4"/><ellipse cx="52" cy="24" rx="6" ry="1.5" fill="#dfe7f3"/></g><g filter="url(#g4)"><polygon points="0,10 11,14 11,31 0,31" fill="#6e6252"/><path d="M1 15 H10 M1 19 H10 M1 23 H10 M1 27 H10" stroke="#5a4f42" stroke-width="0.8"/><polygon points="12,17 24,20 24,31 12,31" fill="#b5b6b5"/><polygon points="24,21 31,23 31,31 24,31" fill="#a8a9aa"/><polygon points="34,23 40,24 40,31 34,31" fill="#bdbebe"/><polygon points="51,27 60,27 60,35 51,35" fill="#c5c6c4"/><polygon points="0,31 60,31 60,48 0,48" fill="#c6c1b8"/><ellipse cx="30" cy="37.5" rx="27" ry="7" fill="#a57a55"/><ellipse cx="33" cy="36" rx="13" ry="3" fill="#b58d66"/><ellipse cx="22" cy="38" rx="6" ry="2" fill="#8f6a4a"/><ellipse cx="40" cy="39" rx="5" ry="2" fill="#7f7a55"/><rect x="16" y="41" width="11" height="2.6" fill="#c23a2d"/><path d="M5 38 V34 M28 40 V33 M47 40 V32" stroke="#6a4a38" stroke-width="0.8"/></g></svg></div>
<div class="abs" style="left:606.9px;top:369.2px;width:61.1px;height:48.6px;border-radius:2px;overflow:hidden"><svg width="61.1" height="48.6" viewBox="0 0 60 48" preserveAspectRatio="none"><defs><linearGradient id="s5" x1="0" y1="0" x2="0" y2="1"><stop offset="0" stop-color="#2d60b8"/><stop offset="0.5" stop-color="#6d95d2"/><stop offset="1" stop-color="#b8cbe6"/></linearGradient><filter id="f5" x="-20%" y="-20%" width="140%" height="140%"><feGaussianBlur stdDeviation="1.6"/></filter><filter id="g5"><feGaussianBlur stdDeviation="0.35"/></filter></defs><rect width="60" height="48" fill="url(#s5)"/><g filter="url(#f5)"><ellipse cx="14" cy="4" rx="9" ry="4" fill="#e4ecf7"/><ellipse cx="3" cy="20" rx="4" ry="5" fill="#d9e4f3"/><ellipse cx="58" cy="2" rx="5" ry="3" fill="#eef2f8"/></g><g filter="url(#g5)"><polygon points="0,24 6,21 6,42 0,42" fill="#cfc3aa"/><polygon points="6,19 30,7 48,1 56,6 56,42 6,42" fill="#ddd6c9"/><polygon points="48,1 54,0 60,4 60,42 52,42" fill="#ebe8e3"/><path d="M8 24 L48 8 M8 29 L49 15 M8 34 L50 22 M8 38.5 L51 30" stroke="#b09b78" stroke-width="2"/><path d="M9 25.5 L48 10.5 M9 30.5 L49 17.5 M9 35.5 L50 24.5" stroke="#6f6556" stroke-width="0.5" opacity="0.7"/><path d="M11 20 V41 M21 15 V41 M33 10 V41 M44 5 V41" stroke="#f1efea" stroke-width="2.2"/><path d="M53 9 L59 12 M53 16 L59 19 M53 23 L59 26 M53 30 L59 33" stroke="#8d8479" stroke-width="0.9"/><polygon points="0,40 60,39 60,48 0,48" fill="#7b7874"/><rect x="22" y="36" width="3" height="5" fill="#3c3a38"/></g></svg></div>
<div class="abs" style="left:675.1px;top:369.2px;width:60.2px;height:48.6px;border-radius:2px;overflow:hidden"><svg width="60.2" height="48.6" viewBox="0 0 60 48" preserveAspectRatio="none"><defs><filter id="f6"><feGaussianBlur stdDeviation="1.2"/></filter></defs><rect width="60" height="48" fill="#2f7466"/><g filter="url(#f6)" opacity="0.55"><polygon points="8,38 12,8 30,4 52,14 56,40" fill="#3b7d70"/><polygon points="0,40 60,38 60,48 0,48" fill="#38796b"/></g></svg></div>
<div class="t" style="left:691.20px;top:388.01px;font-size:5.73px;line-height:5.73px;font-weight:400;color:#ffffff;letter-spacing:-0.046px;">Mais Fotos</div>
<div class="t" style="left:697.00px;top:395.01px;font-size:6.59px;line-height:6.59px;font-weight:700;color:#ffffff;letter-spacing:-0.020px;">+135</div>
</body></html>
